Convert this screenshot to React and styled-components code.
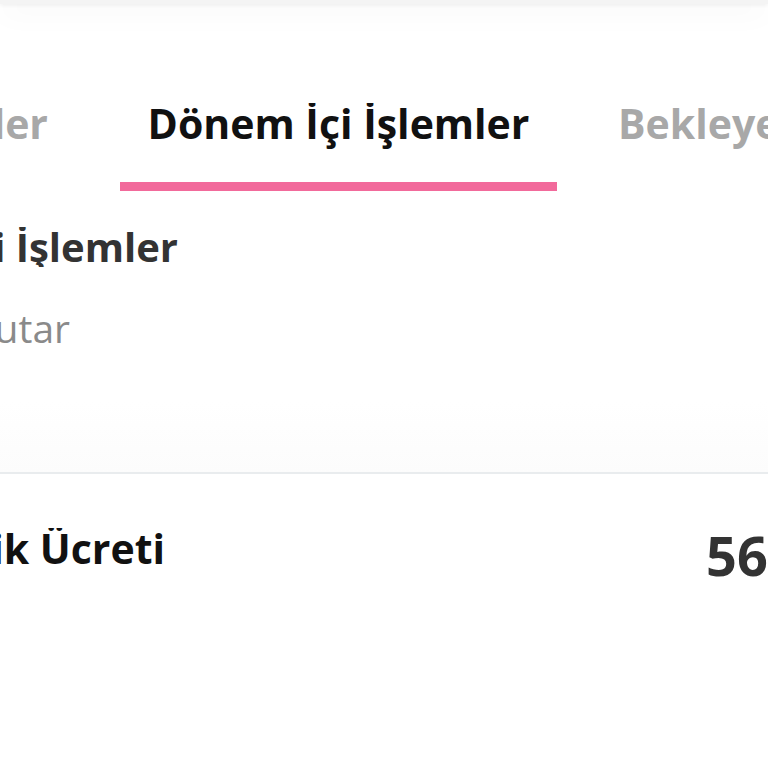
import styled, { createGlobalStyle } from "styled-components";

const GlobalStyle = createGlobalStyle`
  html, body {
    margin: 0;
    padding: 0;
    background: #ffffff;
  }
  body {
    width: 768px;
    height: 768px;
    overflow: hidden;
    font-family: "Open Sans", "Noto Sans", sans-serif;
  }
`

const Page = styled.div`
  width: 768px;
  height: 768px;
  overflow: hidden;
  background: #ffffff;
  display: flex;
  flex-direction: column;
`

const TopBar = styled.div`
  height: 4px;
  background: #f4f4f4;
  box-shadow: 0 5px 30px rgba(0, 0, 0, 0.12), 0 1px 4px rgba(0, 0, 0, 0.07);
  position: relative;
  z-index: 1;
`

const Tabs = styled.div`
  display: grid;
  grid-template-columns: 120px 437px 1fr;
  padding-top: 99px;
`

const Tab = styled.div`
  display: flex;
  flex-direction: column;
  align-items: ${p => (p.$align === "end" ? "flex-end" : p.$align === "start" ? "flex-start" : "center")};
  overflow: hidden;
  padding: ${p => p.$pad || "0"};
`

const TabLabel = styled.div`
  font-size: 41px;
  line-height: 1;
  font-weight: 700;
  white-space: nowrap;
  color: ${p => (p.$active ? "#111111" : "#a8a8a8")};
`

const Underline = styled.div`
  align-self: stretch;
  height: 9px;
  margin-top: 38px;
  background: ${p => (p.$active ? "#f26a9b" : "transparent")};
`

const Section = styled.div`
  padding-top: 36px;
  padding-bottom: 125px;
  border-bottom: 2px solid #e9ecee;
  background: linear-gradient(#ffffff 75%, #fcfcfc);
`

const Clip = styled.div`
  width: ${p => p.$w}px;
  flex-shrink: 0;
  display: flex;
  justify-content: flex-end;
  overflow: hidden;
`

const Title = styled.div`
  font-size: 40px;
  line-height: 1;
  font-weight: 700;
  color: #333333;
  white-space: nowrap;
`

const SubLabel = styled.div`
  margin-top: 41px;
  font-size: 39px;
  line-height: 1;
  font-weight: 400;
  color: #8a8a8a;
  white-space: nowrap;
`

const FeeRow = styled.div`
  display: flex;
  align-items: flex-start;
  padding-top: 54px;
`

const FeeLabel = styled.div`
  font-size: 41px;
  line-height: 1;
  font-weight: 700;
  color: #111111;
  white-space: nowrap;
`

const FeeValue = styled.div`
  flex-shrink: 0;
  margin-left: ${p => p.$offset}px;
  font-size: 54px;
  line-height: 1;
  font-weight: 700;
  color: #333333;
  white-space: nowrap;
`

const App = () => {
  return (
    <>
      <GlobalStyle />
      <Page>
        <TopBar />
        <Tabs>
          <Tab $align="end" $pad="0 72px 0 0">
            <TabLabel>Geçmiş İşlemler</TabLabel>
            <Underline />
          </Tab>
          <Tab>
            <TabLabel $active>Dönem İçi İşlemler</TabLabel>
            <Underline $active />
          </Tab>
          <Tab $align="start" $pad="0 0 0 61px">
            <TabLabel>Bekleyen İşlemler</TabLabel>
            <Underline />
          </Tab>
        </Tabs>
        <Section>
          <Clip $w={178}>
            <Title>Dönem İçi İşlemler</Title>
          </Clip>
          <Clip $w={70}>
            <SubLabel>Tutar</SubLabel>
          </Clip>
        </Section>
        <FeeRow>
          <Clip $w={165}>
            <FeeLabel>Üyelik Ücreti</FeeLabel>
          </Clip>
          <FeeValue $offset={541}>56,00 TL</FeeValue>
        </FeeRow>
      </Page>
    </>
  )
}

export default App;
